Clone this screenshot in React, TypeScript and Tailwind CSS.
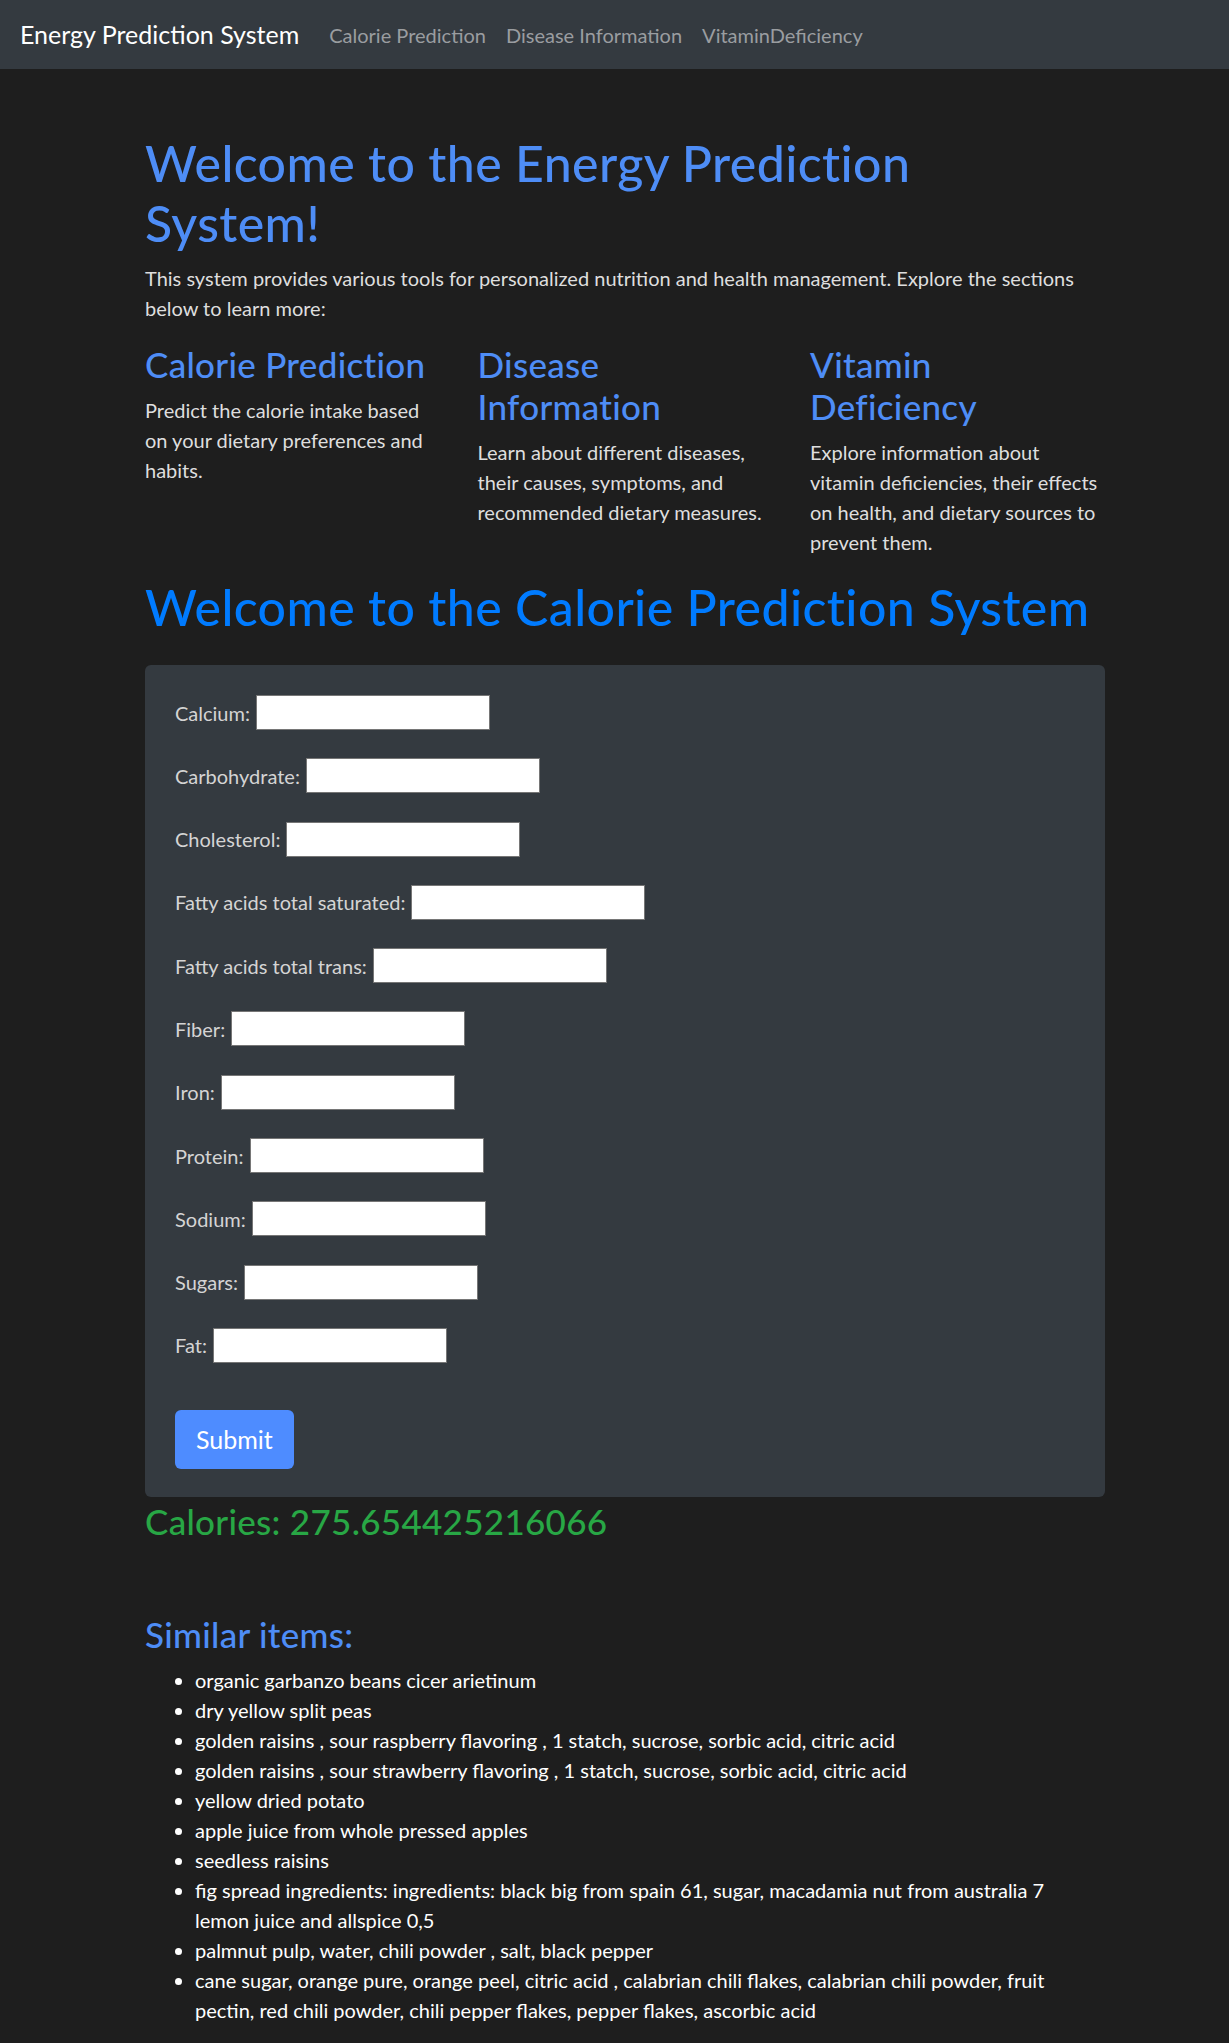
const fields = [
  "Calcium",
  "Carbohydrate",
  "Cholesterol",
  "Fatty acids total saturated",
  "Fatty acids total trans",
  "Fiber",
  "Iron",
  "Protein",
  "Sodium",
  "Sugars",
  "Fat",
]

const similar = [
  "organic garbanzo beans cicer arietinum",
  "dry yellow split peas",
  "golden raisins , sour raspberry flavoring , 1 statch, sucrose, sorbic acid, citric acid",
  "golden raisins , sour strawberry flavoring , 1 statch, sucrose, sorbic acid, citric acid",
  "yellow dried potato",
  "apple juice from whole pressed apples",
  "seedless raisins",
  "fig spread ingredients: ingredients: black big from spain 61, sugar, macadamia nut from australia 7 lemon juice and allspice 0,5",
  "palmnut pulp, water, chili powder , salt, black pepper",
  "cane sugar, orange pure, orange peel, citric acid , calabrian chili flakes, calabrian chili powder, fruit pectin, red chili powder, chili pepper flakes, pepper flakes, ascorbic acid",
]

const sections = [
  {
    title: "Calorie Prediction",
    text: "Predict the calorie intake based on your dietary preferences and habits.",
  },
  {
    title: "Disease Information",
    text: "Learn about different diseases, their causes, symptoms, and recommended dietary measures.",
  },
  {
    title: "Vitamin Deficiency",
    text: "Explore information about vitamin deficiencies, their effects on health, and dietary sources to prevent them.",
  },
]

export default function App() {
  return (
    <div className="min-h-screen bg-[#1e1e1e] font-['Lato','Noto_Sans',sans-serif] text-[20px] leading-[30px] text-[#dedede]">
      {/* navbar */}
      <nav className="h-[69px] bg-[#343a40] flex items-center px-[20px]">
        <a className="text-[25px] leading-[37px] text-white mr-[20px]">Energy Prediction System</a>
        <div className="flex">
          <a className="px-[10px] text-[#9a9da0]">Calorie Prediction</a>
          <a className="px-[10px] text-[#9a9da0]">Disease Information</a>
          <a className="px-[10px] text-[#9a9da0]">VitaminDeficiency</a>
        </div>
      </nav>

      <main className="ml-[145px] w-[960px] pt-[64px] pb-[18px]">
        <h1 className="text-[50px] leading-[60px] font-medium tracking-[0.4px] text-[#4e8df6] mb-[10px] max-w-[880px]">
          Welcome to the Energy Prediction System!
        </h1>
        <p className="mb-[20px]">
          This system provides various tools for personalized nutrition and health management. Explore the sections
          below to learn more:
        </p>

        <div className="grid grid-cols-3 gap-x-[37.5px]">
          {sections.map((s) => (
            <div key={s.title}>
              <h3 className="text-[35px] leading-[42px] font-medium tracking-[0.3px] text-[#4e8df6] mb-[10px]">
                {s.title}
              </h3>
              <p className="mb-[20px]">{s.text}</p>
            </div>
          ))}
        </div>

        <h1 className="text-[50px] leading-[60px] font-medium tracking-[0.4px] text-[#007bff] mb-[28px]">
          Welcome to the Calorie Prediction System
        </h1>

        <form className="bg-[#343a40] rounded-[6px] px-[30px] pt-[30px] pb-[28px]">
          <div className="flex flex-col gap-[28.3px]">
            {fields.map((f) => (
              <div key={f} className="flex items-center h-[35px]">
                <label className="text-[#d4d4d4]">{f}:</label>
                <input
                  type="text"
                  className="ml-[6px] w-[234px] h-[35px] bg-white border border-[#767676] outline-none"
                />
              </div>
            ))}
          </div>
          <button
            type="button"
            className="mt-[47px] h-[59px] px-[21px] rounded-[6px] bg-[#4e8cff] text-white text-[25px] leading-[37px]"
          >
            Submit
          </button>
        </form>

        <h3 className="mt-[3px] text-[35px] leading-[42px] font-medium tracking-[0.3px] text-[#28a745]">
          Calories: 275.654425216066
        </h3>

        <h3 className="mt-[71px] mb-[10px] text-[35px] leading-[42px] font-medium tracking-[0.3px] text-[#4e8df6]">
          Similar items:
        </h3>
        <ul className="list-disc pl-[50px] pr-[12px] text-white">
          {similar.map((item) => (
            <li key={item}>{item}</li>
          ))}
        </ul>
      </main>
    </div>
  )
}
